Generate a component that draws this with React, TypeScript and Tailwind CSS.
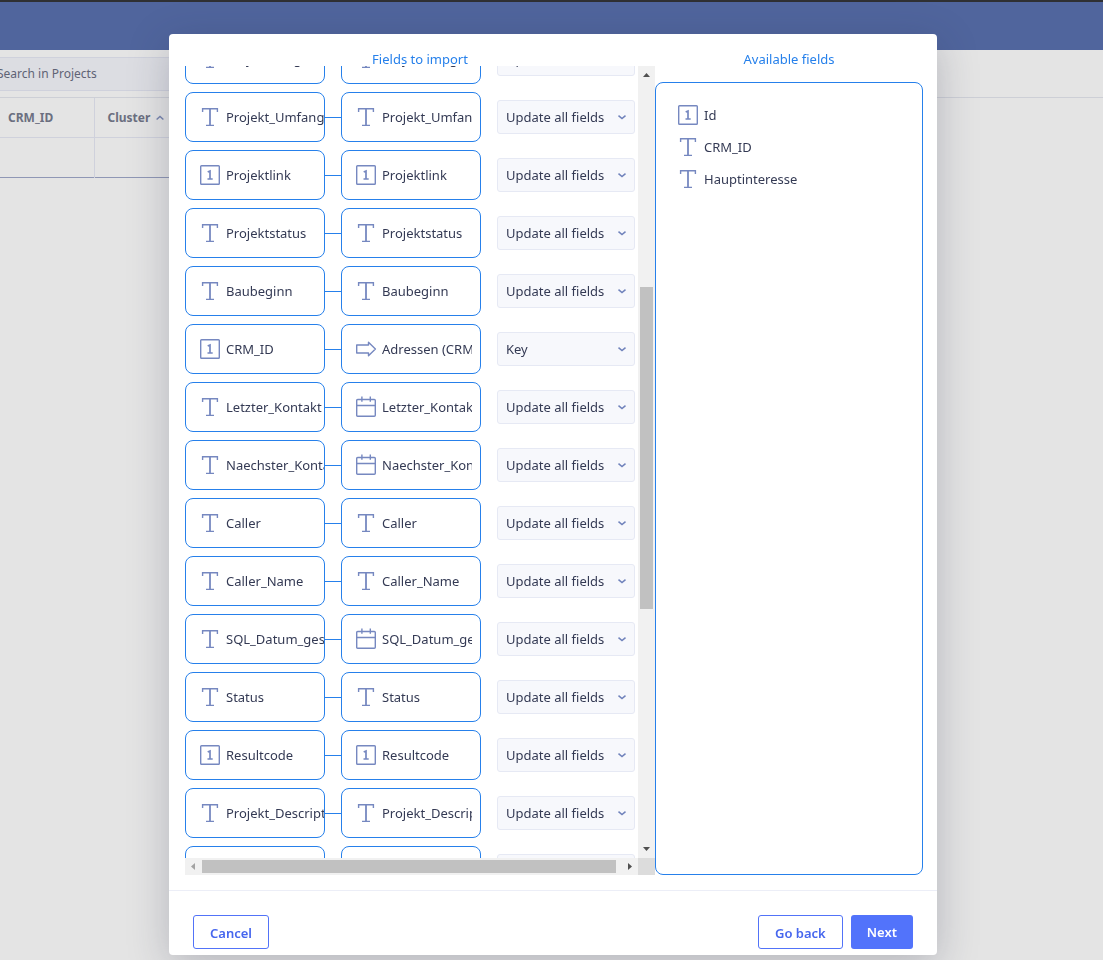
import { useId } from "react";

type Kind = "text" | "number" | "date" | "link";

type Mapping = {
  source: string;
  sourceKind: Kind;
  target: string;
  targetKind: Kind;
  mode: string;
};

const UPDATE = "Update all fields";
const MODES = [UPDATE, "Key"];

const map = (
  source: string,
  sourceKind: Kind = "text",
  targetKind: Kind = sourceKind,
  target: string = source,
  mode: string = UPDATE,
): Mapping => ({ source, sourceKind, target, targetKind, mode });

const mappings: Mapping[] = [
  map("Projekt_Eingabe"),
  map("Projekt_Umfang"),
  map("Projektlink", "number"),
  map("Projektstatus"),
  map("Baubeginn"),
  map("CRM_ID", "number", "link", "Adressen (CRM_ID)", "Key"),
  map("Letzter_Kontakt", "text", "date"),
  map("Naechster_Kontakt", "text", "date"),
  map("Caller"),
  map("Caller_Name"),
  map("SQL_Datum_gesamt", "text", "date"),
  map("Status"),
  map("Resultcode", "number"),
  map("Projekt_Description"),
  map("Projekt_Name"),
];

const available: { name: string; kind: Kind }[] = [
  { name: "Id", kind: "number" },
  { name: "CRM_ID", kind: "text" },
  { name: "Hauptinteresse", kind: "text" },
];

function KindIcon({ kind }: { kind: Kind }) {
  return (
    <svg
      className="size-5 shrink-0 overflow-visible text-[#7688c0]"
      viewBox="0 0 20 20"
      fill="none"
      stroke="currentColor"
      strokeWidth="1.4"
      aria-hidden="true"
    >
      {kind === "text" && (
        <>
          <path d="M2.6 5V1.700h14.800V5M6 18.400h8" />
          <path d="M10 1.700v16.700" strokeWidth="1.800" />
        </>
      )}
      {kind === "number" && (
        <>
          <rect x="0.7" y="0.7" width="18.6" height="18.6" rx="0.8" />
          <path d="M7.700 7.100 10 6v8M7.500 14h5.200" strokeWidth="1.700" />
        </>
      )}
      {kind === "date" && (
        <path d="M1.700 2.500h16.600q1 0 1 1v14.800q0 1-1 1H1.700q-1 0-1-1V3.500q0-1 1-1ZM.7 8.500h18.600M5.900-.5v5.200M14.300-.5v5.200" />
      )}
      {kind === "link" && (
        <path d="M.7 6H12.500V3.300l6.900 6.700-6.900 6.700V14H.7Z" strokeLinejoin="round" />
      )}
    </svg>
  );
}

function MappingRow({ row }: { row: Mapping }) {
  const id = useId();
  return (
    <li className="flex h-[50px] shrink-0 items-center">
      <div className="flex h-full w-[140px] items-center gap-1.5 overflow-hidden rounded-lg border border-[#2680eb] pl-3.5">
        <KindIcon kind={row.sourceKind} />
        <span className="whitespace-nowrap">{row.source}</span>
      </div>
      <div className="h-px w-4 bg-[#2680eb]" />
      <div className="flex h-full w-[140px] items-center gap-1.5 rounded-lg border border-[#2680eb] pr-2 pl-3.5">
        <KindIcon kind={row.targetKind} />
        <span className="overflow-hidden whitespace-nowrap">{row.target}</span>
      </div>
      <div className="relative ml-4">
        <label htmlFor={id} className="sr-only">
          {row.target}
        </label>
        <select
          id={id}
          defaultValue={row.mode}
          className="block h-[34px] w-[138px] appearance-none rounded-[3px] border border-[#e6e9f4] bg-[#f7f8fc] pr-6 pl-2"
        >
          {MODES.map((m) => (
            <option key={m}>{m}</option>
          ))}
        </select>
        <svg
          className="pointer-events-none absolute top-3 right-2 h-2.5 w-2.5 text-[#6f82bb]"
          viewBox="0 0 10 10"
          fill="none"
          stroke="currentColor"
          strokeWidth="1.5"
          aria-hidden="true"
        >
          <path d="m1.500 3.600 3.500 2.900 3.500-2.900" />
        </svg>
      </div>
    </li>
  );
}

function Arrow({ d, className }: { d: string; className: string }) {
  return (
    <svg className={className} viewBox="0 0 17 17" fill="currentColor" aria-hidden="true">
      <path d={d} />
    </svg>
  );
}

function Backdrop() {
  return (
    <div className="min-h-screen bg-[#e4e4e4] text-[#6b6f80]">
      <header className="h-[50px] border-t-2 border-[#2f3033] bg-[#50659d]" />
      <div className="pt-[7px] pb-1.5">
        <label htmlFor="search" className="sr-only">
          Search
        </label>
        <input
          id="search"
          type="search"
          placeholder="Search in Projects"
          className="-ml-[3px] block h-[34px] w-80 border-y border-[#cfd1dc] bg-[#dcdde2] pb-0.5 text-xs placeholder:text-[#5f6375]"
        />
      </div>
      <div className="border-t border-[#cdcfd6]">
        <table className="w-80 table-fixed border-collapse text-left text-xs font-semibold">
          <thead>
            <tr className="h-[39px] border-b border-[#cfd1dc]">
              <th className="w-[94px] border-r border-[#cfd1dc] pt-0.5 pl-2">CRM_ID</th>
              <th className="pt-0.5 pl-[13px]">
                <span className="flex items-center gap-1.5">
                  Cluster
                  <svg
                    className="size-2 text-[#7885ae]"
                    viewBox="0 0 8 8"
                    fill="none"
                    stroke="currentColor"
                    strokeWidth="1.5"
                    aria-hidden="true"
                  >
                    <path d="M.6 5.500 4 2.500l3.400 3" />
                  </svg>
                </span>
              </th>
            </tr>
          </thead>
          <tbody>
            <tr className="h-10 border-b border-[#8f97b5]">
              <td className="border-r border-[#cfd1dc]" />
              <td />
            </tr>
          </tbody>
        </table>
      </div>
    </div>
  );
}

export default function App() {
  return (
    <div className="font-['Noto_Sans',sans-serif]">
      <Backdrop />
      <div className="fixed inset-0 flex justify-center pt-[34px] pb-[5px] pl-[3px]">
        <div
          role="dialog"
          aria-modal="true"
          aria-label="Import fields"
          className="flex w-full max-w-[768px] flex-col rounded-sm bg-white text-[13px] leading-5 text-[#343a54] shadow-[0_10px_40px_rgba(40,44,70,0.25)]"
        >
          <div className="flex min-h-0 flex-1 px-4 pt-4 pr-3.5">
            <section className="flex w-[470px] shrink-0 flex-col">
              <h2 className="h-4 shrink-0 text-center leading-[18px] text-[#2680eb]">
                Fields to import
              </h2>
              <div className="flex min-h-0 flex-1">
                <div className="min-w-0 flex-1 overflow-hidden">
                  <ul className="-mt-8 flex flex-col gap-2">
                    {mappings.map((row) => (
                      <MappingRow key={row.source} row={row} />
                    ))}
                  </ul>
                </div>
                <div className="flex w-[17px] flex-col items-center bg-[#f1f1f1]">
                  <Arrow className="size-[17px] text-[#505050]" d="M5 11h7L8.5 7Z" />
                  <div className="h-[204px]" />
                  <div className="h-[322px] w-[13px] bg-[#c1c1c1]" />
                  <div className="flex-1" />
                  <Arrow className="size-[17px] text-[#505050]" d="M5 6h7l-3.500 4Z" />
                </div>
              </div>
              <div className="flex h-[17px] shrink-0 items-center bg-[#f1f1f1]">
                <Arrow className="size-[17px] text-[#a3a3a3]" d="M10 5v7L6 8.500Z" />
                <div className="h-[13px] w-[414px] bg-[#c1c1c1]" />
                <div className="flex-1" />
                <Arrow className="size-[17px] text-[#505050]" d="M7 5v7l4-3.500Z" />
                <div className="size-[17px] bg-[#dcdcdc]" />
              </div>
            </section>
            <section className="flex min-w-0 flex-1 flex-col">
              <h2 className="h-4 shrink-0 text-center leading-[18px] text-[#2680eb]">
                Available fields
              </h2>
              <ul className="mt-4 flex flex-1 flex-col gap-3 rounded-lg border border-[#2680eb] px-[22px] pt-[22px]">
                {available.map((f) => (
                  <li key={f.name} className="flex h-5 items-center gap-1.5">
                    <KindIcon kind={f.kind} />
                    <span>{f.name}</span>
                  </li>
                ))}
              </ul>
            </section>
          </div>
          <footer className="mt-[15px] flex shrink-0 gap-2 border-t border-[#eceef7] px-6 pt-6 pb-1.5 font-semibold">
            <button className="h-[34px] rounded-[3px] border border-[#5273f8] px-4 pt-0.5 text-[#4666ee]">
              Cancel
            </button>
            <div className="flex-1" />
            <button className="h-[34px] rounded-[3px] border border-[#5273f8] px-4 pt-0.5 text-[#4666ee]">
              Go back
            </button>
            <button className="h-[34px] rounded-[3px] bg-[#5273fb] px-4 text-white">
              Next
            </button>
          </footer>
        </div>
      </div>
    </div>
  );
}
